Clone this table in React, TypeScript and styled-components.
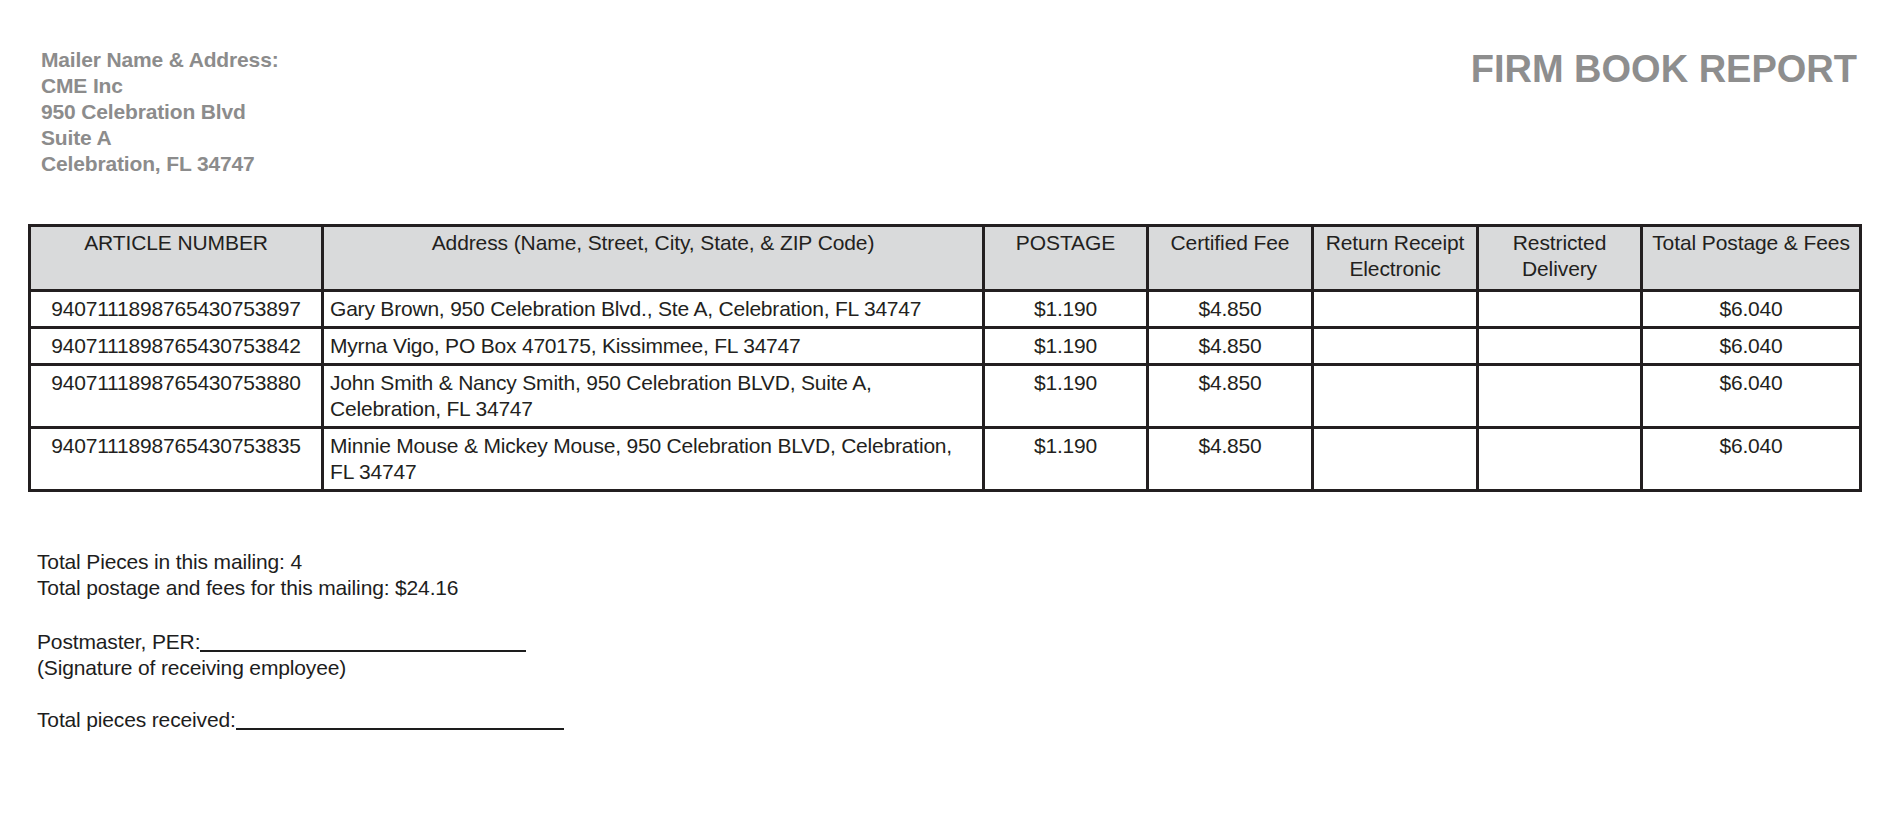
import React from "react";
import styled, { createGlobalStyle } from "styled-components";

const GlobalStyle = createGlobalStyle`
  html, body {
    margin: 0;
    padding: 0;
    background: #ffffff;
  }
  body {
    font-family: "Liberation Sans", Arial, Helvetica, sans-serif;
    color: #231f20;
  }
`;

const Page = styled.div`
  width: 1899px;
  min-height: 831px;
  box-sizing: border-box;
  padding: 47px 37px 0 28px;
  background: #fff;
`;

const Header = styled.header`
  display: flex;
  justify-content: space-between;
  align-items: flex-start;
  padding: 0 5px 0 13px;
`;

const MailerBlock = styled.div`
  font-size: 21px;
  line-height: 26px;
  font-weight: 700;
  color: #8c8c8c;
  letter-spacing: -0.15px;
`;

const MailerLine = styled.div``;

const Title = styled.h1`
  margin: 0;
  font-size: 38px;
  font-weight: 700;
  color: #8e8e8e;
  line-height: 44px;
  letter-spacing: 0;
`;

const Table = styled.table`
  margin-top: 47px;
  width: 1834px;
  table-layout: fixed;
  border-collapse: separate;
  border-spacing: 0;
  border-top: 3px solid #231f20;
  border-left: 3px solid #231f20;
  font-size: 21px;
  line-height: 26px;
  letter-spacing: -0.2px;
  color: #231f20;
`;

const HeadCell = styled.th<{ $w: number }>`
  width: ${(p) => p.$w}px;
  box-sizing: border-box;
  background: #d9dadb;
  font-weight: 400;
  text-align: center;
  vertical-align: top;
  padding: 3px 4px 7px;
  letter-spacing: -0.1px;
  border-right: 3px solid #231f20;
  border-bottom: 3px solid #231f20;
`;

const Cell = styled.td<{ $align?: "left" | "center" }>`
  box-sizing: border-box;
  text-align: ${(p) => p.$align ?? "center"};
  vertical-align: top;
  padding: 4px 6px 4px 6px;
  border-right: 3px solid #231f20;
  border-bottom: 3px solid #231f20;
  height: 26px;
`;

const Footer = styled.div`
  margin-top: 57px;
  padding-left: 9px;
  font-size: 21px;
  line-height: 26px;
  letter-spacing: -0.15px;
  color: #1d1d1d;
`;

const Line = styled.div``;

const Spacer = styled.div<{ $h: number }>`
  height: ${(p) => p.$h}px;
`;

const SignLine = styled.span<{ $w: number }>`
  display: inline-block;
  width: ${(p) => p.$w}px;
  height: 20px;
  border-bottom: 2px solid #1d1d1d;
  vertical-align: -3px;
`;

const columns = [
  { label: "ARTICLE NUMBER", w: 293 },
  { label: "Address (Name, Street, City, State, & ZIP Code)", w: 661 },
  { label: "POSTAGE", w: 164 },
  { label: "Certified Fee", w: 165 },
  { label: "Return Receipt Electronic", w: 165 },
  { label: "Restricted Delivery", w: 164 },
  { label: "Total Postage & Fees", w: 219 },
];

const rows = [
  {
    article: "9407111898765430753897",
    address: "Gary Brown, 950 Celebration Blvd., Ste A, Celebration, FL 34747",
  },
  {
    article: "9407111898765430753842",
    address: "Myrna Vigo, PO Box 470175, Kissimmee, FL 34747",
  },
  {
    article: "9407111898765430753880",
    address: "John Smith & Nancy Smith, 950 Celebration BLVD, Suite A, Celebration, FL 34747",
  },
  {
    article: "9407111898765430753835",
    address: "Minnie Mouse & Mickey Mouse, 950 Celebration BLVD, Celebration, FL 34747",
  },
];

export default function App() {
  return (
    <>
      <GlobalStyle />
      <Page>
        <Header>
          <MailerBlock>
            <MailerLine>Mailer Name &amp; Address:</MailerLine>
            <MailerLine>CME Inc</MailerLine>
            <MailerLine>950 Celebration Blvd</MailerLine>
            <MailerLine>Suite A</MailerLine>
            <MailerLine>Celebration, FL 34747</MailerLine>
          </MailerBlock>
          <Title>FIRM BOOK REPORT</Title>
        </Header>

        <Table>
          <thead>
            <tr>
              {columns.map((c) => (
                <HeadCell key={c.label} $w={c.w}>
                  {c.label}
                </HeadCell>
              ))}
            </tr>
          </thead>
          <tbody>
            {rows.map((r) => (
              <tr key={r.article}>
                <Cell>{r.article}</Cell>
                <Cell $align="left">{r.address}</Cell>
                <Cell>$1.190</Cell>
                <Cell>$4.850</Cell>
                <Cell />
                <Cell />
                <Cell>$6.040</Cell>
              </tr>
            ))}
          </tbody>
        </Table>

        <Footer>
          <Line>Total Pieces in this mailing: 4</Line>
          <Line>Total postage and fees for this mailing: $24.16</Line>
          <Spacer $h={28} />
          <Line>
            Postmaster, PER:<SignLine $w={326} />
          </Line>
          <Line>(Signature of receiving employee)</Line>
          <Spacer $h={26} />
          <Line>
            Total pieces received:<SignLine $w={328} />
          </Line>
        </Footer>
      </Page>
    </>
  );
}
